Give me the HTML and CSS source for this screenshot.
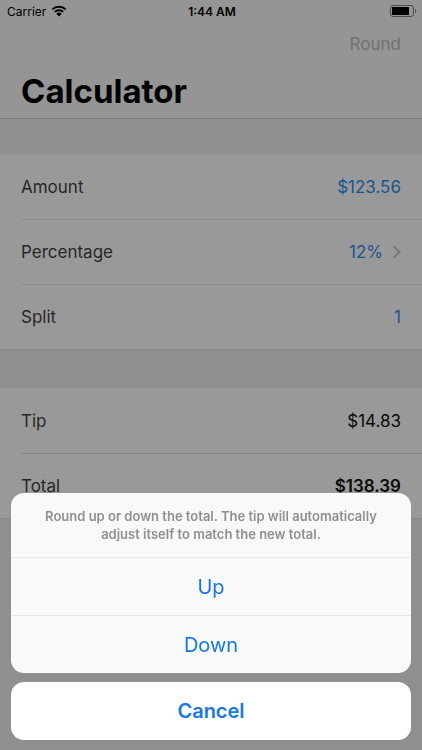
FILE: index.html
```html
<!DOCTYPE html>
<html lang="en">
<head>
    <meta charset="UTF-8">
    <meta name="viewport" content="width=device-width, initial-scale=1.0">
    <title>Calculator</title>
    <link rel="stylesheet" href="styles.css">
</head>
<body>
    <header class="header">
        <div class="status-bar">
            <div class="carrier">
                <span>Carrier</span>
                <svg class="wifi" width="16" height="12" viewBox="0 0 16 12" aria-hidden="true">
                    <path d="M1.3 4.4a9.6 9.6 0 0 1 13.4 0M3.7 6.9a6.2 6.2 0 0 1 8.6 0" fill="none" stroke="#000" stroke-width="2"/>
                    <path d="M8 11.4 5.3 8.7a3.9 3.9 0 0 1 5.4 0z"/>
                </svg>
            </div>
            <span class="time">1:44 AM</span>
            <svg class="battery" width="27" height="12" viewBox="0 0 27 12" aria-hidden="true">
                <rect x="0.5" y="0.5" width="23" height="11" rx="2.5" fill="none" stroke="#000" stroke-opacity="0.5"/>
                <rect x="2" y="2" width="17" height="8" rx="0.5"/>
                <path d="M25 4a2.2 2.2 0 0 1 0 4z" fill-opacity="0.5"/>
            </svg>
        </div>
        <div class="nav">
            <button class="round-btn" type="button">Round</button>
        </div>
        <h1>Calculator</h1>
    </header>

    <main>
        <form class="group">
            <div class="row">
                <label for="amount">Amount</label>
                <input type="text" id="amount" name="amount" value="$123.56">
            </div>
            <div class="row">
                <label for="percentage">Percentage</label>
                <button class="picker" type="button" id="percentage">
                    12%
                    <svg width="9" height="14" viewBox="0 0 9 14" aria-hidden="true">
                        <path d="M1.5 1 7.5 7l-6 6" fill="none" stroke="#c7c7cc" stroke-width="2"/>
                    </svg>
                </button>
            </div>
            <div class="row">
                <label for="split">Split</label>
                <input type="text" id="split" name="split" value="1">
            </div>
        </form>

        <div class="group results">
            <div class="row">
                <span>Tip</span>
                <output>$14.83</output>
            </div>
            <div class="row">
                <span>Total</span>
                <output class="total">$138.39</output>
            </div>
        </div>
    </main>

    <div class="overlay">
        <div class="sheet" role="dialog" aria-labelledby="sheet-message">
            <div class="actions">
                <p id="sheet-message">Round up or down the total. The tip will automatically adjust itself to match the new total.</p>
                <button type="button">Up</button>
                <button type="button">Down</button>
            </div>
            <button class="cancel" type="button">Cancel</button>
        </div>
    </div>
</body>
</html>
```

FILE: styles.css
```css
* { box-sizing: border-box; }
body {
    margin: 0;
    min-height: 100vh;
    background: #efeff4;
    font-family: Inter, "Liberation Sans", sans-serif;
    font-size: 17px;
    color: #111;
}
button, input {
    font: inherit;
    border: none;
    background: none;
    padding: 0;
}
button { cursor: pointer; }

.header {
    background: #f8f8f8;
    border-bottom: 1px solid #d4d4da;
    color: #000;
}
.status-bar {
    display: grid;
    grid-template-columns: 1fr auto 1fr;
    align-items: center;
    height: 22px;
    padding: 0 5px 0 7px;
    font-size: 12px;
}
.carrier {
    display: flex;
    align-items: center;
    gap: 5px;
}
.time { font-weight: 600; }
.battery { justify-self: end; }
.nav {
    display: flex;
    justify-content: flex-end;
    align-items: center;
    height: 44px;
    padding: 0 21px;
}
.round-btn { color: #bcbcbc; }
h1 {
    margin: 0;
    padding: 3px 21px 5px;
    font-size: 33px;
    line-height: 44px;
    font-weight: 700;
}

.group {
    margin-top: 35px;
    padding-left: 21px;
    background: #fff;
    border-bottom: 1px solid #e4e4e8;
}
.results { margin-top: 38px; }
.row {
    display: flex;
    justify-content: space-between;
    align-items: center;
    height: 65px;
    padding-right: 21px;
}
.row + .row { border-top: 1px solid #ececef; }
.results .row + .row { border-top-color: #e0e0e4; }
.row label, .row span { color: #444; }
.row input {
    flex: 1;
    min-width: 0;
    text-align: right;
    color: #2b8ff2;
}
.picker {
    display: flex;
    align-items: center;
    gap: 9px;
    color: #2b8ff2;
}
.total { font-weight: 600; }

.overlay {
    position: fixed;
    inset: 0;
    display: flex;
    flex-direction: column;
    justify-content: flex-end;
    padding: 10px 11px;
    background: rgba(0,0,0,0.4);
}
.sheet {
    display: flex;
    flex-direction: column;
    gap: 9px;
}
.actions {
    background: #f9f9f9;
    border-radius: 13px;
    overflow: hidden;
}
.actions p {
    margin: 0;
    padding: 14px 16px;
    font-size: 13px;
    line-height: 18px;
    font-weight: 600;
    text-align: center;
    color: #8f8f8f;
}
.sheet button {
    display: block;
    width: 100%;
    height: 58px;
    font-size: 20px;
    color: #1577e8;
}
.actions button { border-top: 1px solid #e8e8e8; }
.sheet .cancel {
    background: #fff;
    border-radius: 13px;
    font-weight: 600;
}
```
